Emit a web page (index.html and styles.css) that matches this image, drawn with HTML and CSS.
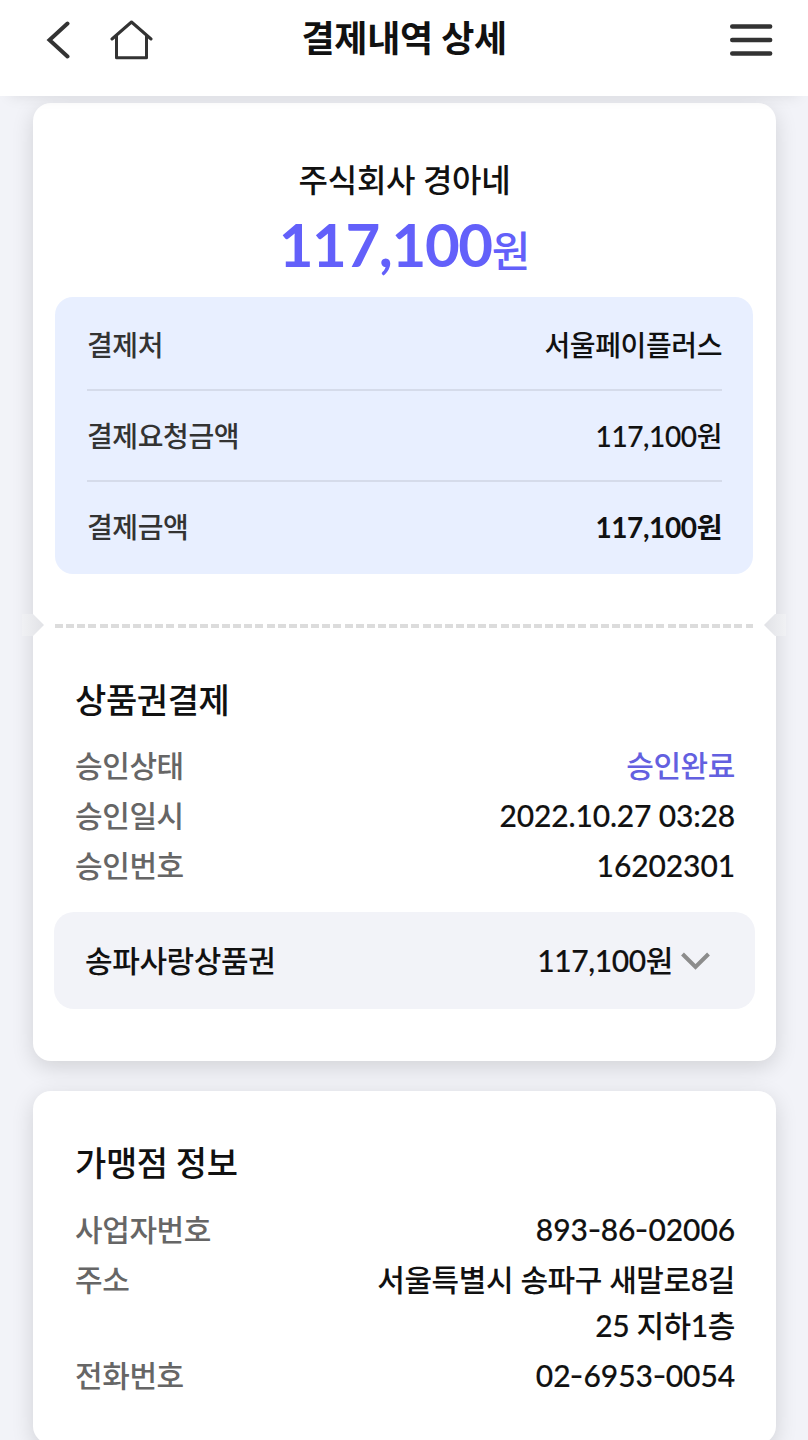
FILE: index.html
```html
<!DOCTYPE html>
<html lang="ko">
<head>
<meta charset="utf-8">
<title>결제내역 상세</title>
<link rel="stylesheet" href="styles.css">
</head>
<body>
<div class="screen">
  <header class="header">
    <div class="header-left">
      <svg class="icon-back" width="24" height="40" viewBox="0 0 24 40" fill="none" stroke="#333" stroke-width="4" stroke-linecap="round"><path d="M21.500 3.500 3.500 20 21.500 36.500"/></svg>
      <svg class="icon-home" width="44" height="42" viewBox="0 0 44 42" fill="none" stroke="#333" stroke-width="3" stroke-linecap="round" stroke-linejoin="round"><path d="M2 20 21.500 3 41 20"/><path d="M6.500 17V38.700H36.500V17"/></svg>
    </div>
    <h1 class="title">결제내역 상세</h1>
    <svg class="icon-menu" width="44" height="34" viewBox="0 0 44 34" stroke="#333" stroke-width="4.400" stroke-linecap="round"><path d="M3.200 3.500H41.200M3.200 17H41.200M3.200 30.500H41.200"/></svg>
  </header>

  <main class="content">
    <section class="card">
      <h2 class="shop">주식회사 경아네</h2>
      <p class="total"><span class="total-number">117,100</span><span class="total-unit">원</span></p>
      <div class="summary">
        <div class="summary-row"><span class="summary-label">결제처</span><span class="summary-value">서울페이플러스</span></div>
        <div class="summary-row"><span class="summary-label">결제요청금액</span><span class="summary-value"><span class="figure">117,100</span>원</span></div>
        <div class="summary-row"><span class="summary-label">결제금액</span><span class="summary-value strong">117,100원</span></div>
      </div>
      <div class="tear"><i class="notch"></i><div class="dashes"></div><i class="notch notch-right"></i></div>
      <div class="details">
        <h3 class="section-title">상품권결제</h3>
        <div class="row"><span class="label">승인상태</span><span class="value accent">승인완료</span></div>
        <div class="row"><span class="label">승인일시</span><span class="value number date">2022.10.27 03:28</span></div>
        <div class="row"><span class="label">승인번호</span><span class="value number">16202301</span></div>
      </div>
      <div class="voucher">
        <span class="voucher-name">송파사랑상품권</span>
        <span class="voucher-amount"><span class="figure">117,100</span>원</span>
        <svg width="30" height="20" viewBox="0 0 30 20" fill="none" stroke="#8c8c8c" stroke-width="4"><path d="M1.500 3 14.500 16 27.500 3"/></svg>
      </div>
    </section>

    <section class="card">
      <div class="details merchant">
        <h3 class="section-title">가맹점 정보</h3>
        <div class="row"><span class="label">사업자번호</span><span class="value number">893<span class="dash">-</span>86<span class="dash">-</span>02006</span></div>
        <div class="row"><span class="label">주소</span><span class="value">서울특별시 송파구 새말로<span class="figure">8</span>길<br><span class="figure">25</span> 지하<span class="figure">1</span>층</span></div>
        <div class="row"><span class="label">전화번호</span><span class="value number">02<span class="dash">-</span>6953<span class="dash">-</span>0054</span></div>
      </div>
    </section>
  </main>
</div>
</body>
</html>
```
FILE: styles.css
```css
* { box-sizing: border-box; margin: 0; padding: 0; }
body {
  background: #f2f3f8;
  color: #111;
  font-family: Lato, "Noto Sans CJK KR", sans-serif;
  font-weight: 500;
}
.screen { height: 1440px; overflow: hidden; }

.header {
  position: relative;
  z-index: 2;
  height: 96px;
  padding: 0 35px 16px 46px;
  display: grid;
  grid-template-columns: 1fr 206px 1fr;
  align-items: center;
  background: #fff;
  box-shadow: 0 10px 14px -10px rgba(0, 0, 0, .1);
}
.header-left { display: flex; align-items: center; gap: 40px; }
.title { font-size: 36px; font-weight: 700; line-height: 50px; letter-spacing: -.3px; margin: -4px 5px 0 -5px; white-space: nowrap; }
.icon-menu { justify-self: end; }

.content { padding: 7px 32px 0 33px; display: flex; flex-direction: column; gap: 30px; }
.card {
  background: #fff;
  border-radius: 18px;
  box-shadow: 0 6px 22px rgba(0, 0, 0, .14);
}
.card:first-child { height: 958px; padding-top: 53px; }
.card + .card { height: 353px; padding-top: 47px; }

.shop { font-size: 32px; font-weight: 500; line-height: 48px; text-align: center; letter-spacing: -.3px; }
.total { height: 76px; display: flex; justify-content: center; align-items: baseline; color: #6360fa; line-height: 80px; }
.total-number { font-size: 60px; font-weight: 700; letter-spacing: -1.4px; }
.total-unit { font-size: 42px; line-height: 76px; }

.summary {
  margin: 17px 23px 0 22px;
  padding: 3px 31px 1px 32px;
  border-radius: 18px;
  background: #e8efff;
}
.summary-row {
  height: 91px;
  display: flex;
  justify-content: space-between;
  align-items: center;
  padding-bottom: 1px;
  font-size: 28px;
  letter-spacing: -.4px;
  border-bottom: 2px solid #d5dbea;
}
.summary-row:last-child { border-bottom-color: transparent; }
.summary-label { color: #333; }
.strong { font-weight: 700; }
.figure { -webkit-text-stroke: .15px currentColor; }

.tear { margin: 40px -10px 0 -11px; height: 22px; display: flex; align-items: center; justify-content: space-between; }
.notch {
  width: 22px;
  height: 22px;
  background: linear-gradient(90deg, #f0f1f4, #e1e2e6);
  clip-path: polygon(0 0, 50% 0, 100% 50%, 50% 100%, 0 100%);
}
.notch-right { transform: scaleX(-1); }
.dashes {
  width: 698px;
  height: 4px;
  margin-top: 2px;
  background: repeating-linear-gradient(90deg, #dcdcdc 0 8px, transparent 8px 11.138px);
}

.details { padding: 39px 41px 0 42px; }
.merchant { padding-top: 0; }
.section-title { font-size: 34px; font-weight: 500; line-height: 50px; letter-spacing: -.4px; margin-bottom: 17px; }
.merchant .section-title { margin-bottom: 18px; }
.row { display: flex; justify-content: space-between; font-size: 30px; line-height: 46px; letter-spacing: -.4px; margin-bottom: 4px; }
.label { color: #666; }
.value { text-align: right; }
.number { letter-spacing: -.1px; -webkit-text-stroke: .15px currentColor; }
.date { letter-spacing: -.17px; }
.accent { color: #6360e0; }
.dash { display: inline-block; margin: 0 1px; transform: translateY(-1px) scaleX(1.25); }

.voucher {
  height: 97px;
  margin: 24px 21px 0;
  padding: 0 44px 4px 31px;
  display: flex;
  align-items: center;
  border-radius: 20px;
  background: #f2f3f8;
  font-size: 30px;
  letter-spacing: -.4px;
}
.voucher-amount { margin-left: auto; margin-right: 8px; }
.voucher svg { margin-top: 4px; }
```
